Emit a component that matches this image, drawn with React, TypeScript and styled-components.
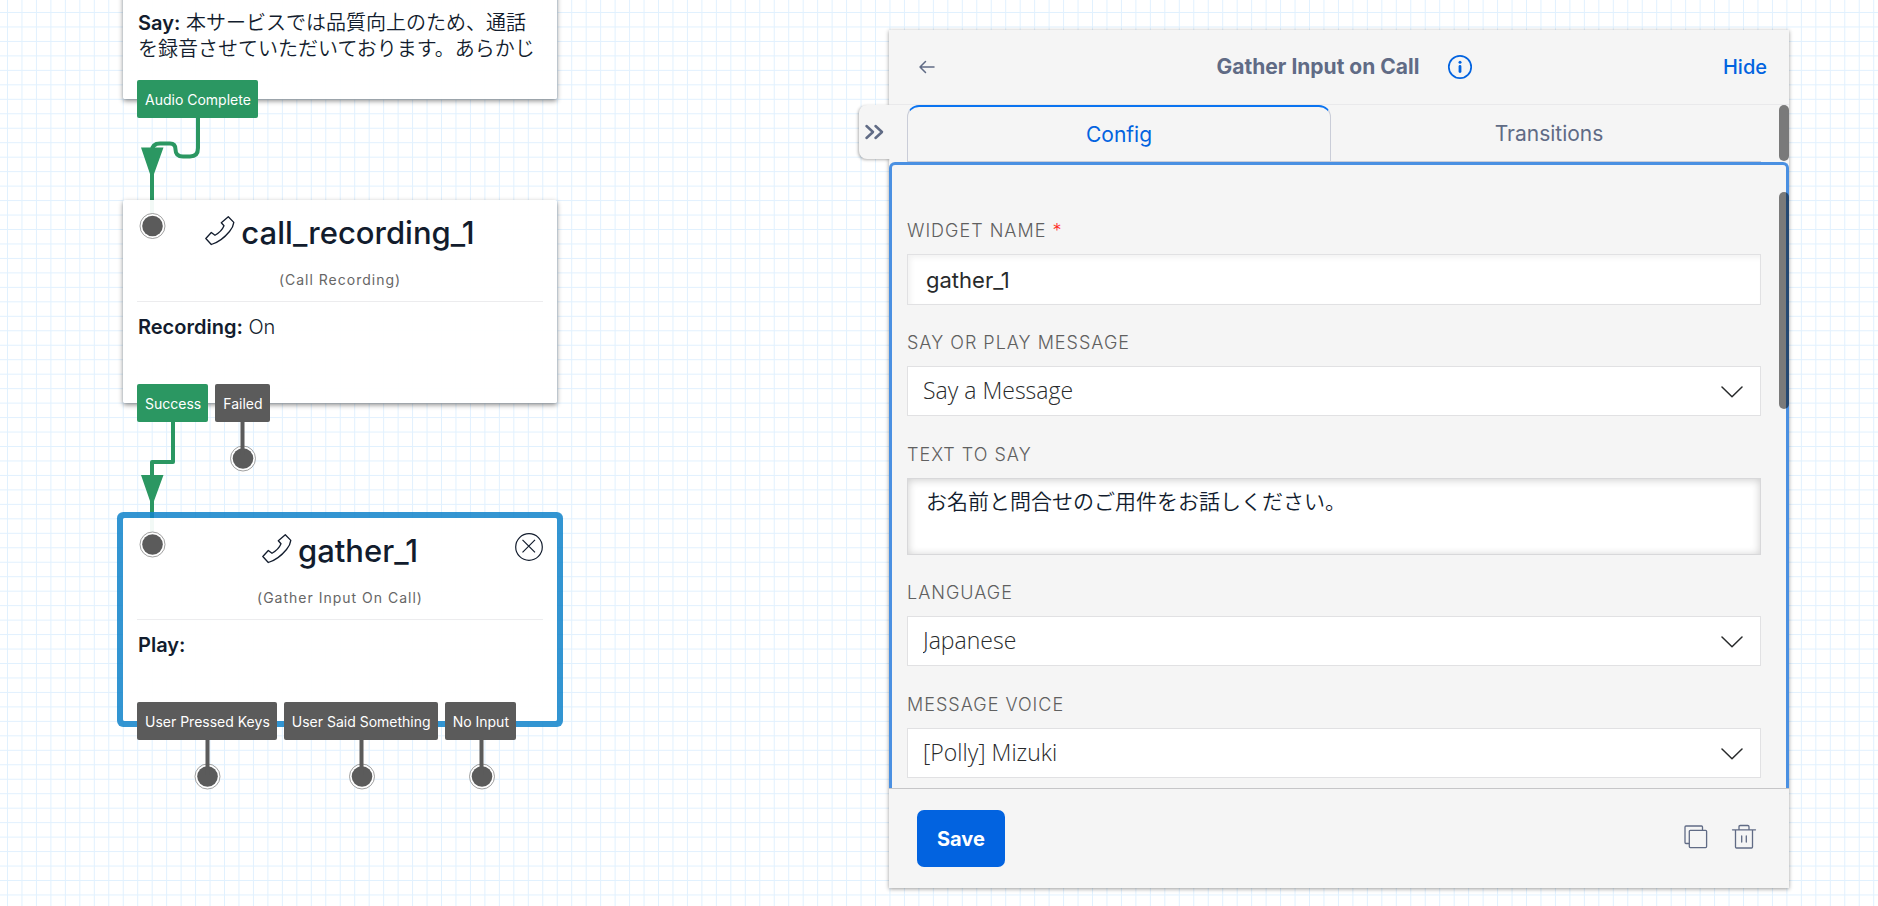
import React from "react";
import styled, { createGlobalStyle } from "styled-components";

const GlobalStyle = createGlobalStyle`
  * { box-sizing: border-box; }
  html, body { margin: 0; height: 100%; }
  #root { height: 100%; }
  body {
    font-family: Inter, "Noto Sans CJK JP", sans-serif;
    color: #121c2d;
    background: #fff;
  }
  button { font: inherit; color: inherit; background: none; border: 0; padding: 0; cursor: pointer; }
`;

const Page = styled.div`
  position: relative;
  display: flex;
  justify-content: flex-end;
  height: 100vh;
  min-height: 640px;
  overflow: hidden;
`;

/* ---------- canvas ---------- */

const Canvas = styled.main`
  position: absolute;
  inset: 0;
  overflow: hidden;
`;

const CanvasLayer = styled.svg`
  position: absolute;
  inset: 0;
  width: 100%;
  height: 100%;
`;

const Node = styled.section<{ $top: number; $height: number; $selected?: boolean }>`
  position: absolute;
  left: 123px;
  top: ${(p) => p.$top}px;
  width: 434px;
  height: ${(p) => p.$height}px;
  padding: 0 14px;
  border-radius: 2px;
  background: rgba(255, 255, 255, 0.94);
  box-shadow: ${(p) =>
    p.$selected
      ? "0 0 0 6px rgba(18, 131, 203, 0.86)"
      : "0 2px 5px rgba(0, 0, 0, 0.45)"};
`;

const NodeHeader = styled.header`
  display: flex;
  flex-direction: column;
  align-items: center;
  height: 102px;
  border-bottom: 1px solid #ececee;
`;

const NodeTitle = styled.h2`
  display: flex;
  align-items: center;
  gap: 6px;
  margin: 13px 0 0;
  font-size: 31px;
  line-height: 40px;
  font-weight: 450;
  svg { margin-bottom: 4px; }
`;

const NodeKind = styled.p`
  margin: 17px 0 0;
  font-size: 14px;
  line-height: 20px;
  letter-spacing: 1px;
  color: #666;
`;

const NodeText = styled.p`
  margin: 12px 0 0;
  padding-left: 1px;
  font-size: 20px;
  line-height: 26px;
  font-weight: 350;
  strong { font-weight: 600; }
`;

const Outputs = styled.div`
  position: absolute;
  left: 14px;
  bottom: -19px;
  display: flex;
  gap: 7px;
`;

const Output = styled.button<{ $done?: boolean }>`
  && {
    height: 38px;
    padding: 0 7px 0 8px;
    border-radius: 2px;
    background: ${(p) => (p.$done ? "#2b9762" : "#5b5b5b")};
    color: #fff;
    font-size: 14px;
    font-weight: 400;
    white-space: nowrap;
  }
`;

const RemoveButton = styled.button`
  position: absolute;
  top: 15px;
  right: 14px;
  width: 28px;
  height: 28px;
  svg { display: block; }
`;

/* ---------- side panel ---------- */

const Panel = styled.aside`
  position: relative;
  display: flex;
  flex-direction: column;
  width: 900px;
  max-width: calc(100% - 120px);
  margin: 30px 89px 18px 0;
  background: #f5f5f5;
  box-shadow: 0 1px 4px rgba(0, 0, 0, 0.4);
`;

const PanelHeader = styled.header`
  display: flex;
  align-items: center;
  height: 75px;
  flex: none;
  padding: 0 22px 0 26px;
  border-bottom: 1px solid #e9e9eb;
`;

const BackButton = styled.button`
  width: 52px;
  height: 24px;
  svg { display: block; }
`;

const PanelTitle = styled.div`
  display: flex;
  flex: 1;
  align-items: center;
  justify-content: center;
  gap: 28px;
  h1 { margin: 0; font-size: 21px; line-height: 28px; font-weight: 700; color: #606b85; }
  svg { display: block; }
`;

const HideButton = styled.button`
  && { color: #0263e0; font-size: 20px; font-weight: 500; }
`;

const CollapseButton = styled.button`
  position: absolute;
  left: -30px;
  top: 75px;
  width: 31px;
  height: 54px;
  && { background: #f5f5f5; }
  border-radius: 8px 0 0 8px;
  box-shadow: -1px 1px 3px rgba(0, 0, 0, 0.3);
  clip-path: inset(-6px 0 -6px -6px);
  svg { display: block; margin: 0 0 0 5px; }
`;

const Tabs = styled.div`
  display: grid;
  grid-template-columns: 1fr 1fr;
  column-gap: 6px;
  flex: none;
  height: 57px;
  margin: 0 28px 0 18px;
  border-bottom: 1px solid #cacdd8;
`;

const Tab = styled.button<{ $active?: boolean }>`
  && {
    font-size: 21px;
    color: ${(p) => (p.$active ? "#0263e0" : "#606b85")};
    ${(p) =>
      p.$active &&
      `border: 1px solid #cacdd8;
       border-top: 2px solid #0a73f0;
       border-bottom: 0;
       border-radius: 12px 12px 0 0;`}
  }
`;

const FormArea = styled.div`
  flex: 1;
  min-height: 0;
  overflow: hidden;
  border: 3px solid #4a90e2;
  border-bottom: 0;
  border-radius: 6px 6px 0 0;
  padding: 53px 25px 0 15px;
`;

const Field = styled.div<{ $select?: boolean }>`
  display: flex;
  flex-direction: column;
  gap: 10px;
  margin-bottom: ${(p) => (p.$select ? 26 : 25)}px;
`;

const Label = styled.label`
  font-size: 18px;
  line-height: 26px;
  font-weight: 350;
  letter-spacing: 1px;
  text-transform: uppercase;
  color: #606060;
  span { color: #ff2a1f; }
`;

const TextInput = styled.input`
  height: 51px;
  padding: 0 18px;
  border: 1px solid #e1e1e3;
  border-radius: 0;
  background: #fff;
  box-shadow: inset 3px 3px 5px rgba(0, 0, 0, 0.05);
  font: 400 22px Inter, sans-serif;
  color: #282a2b;
`;

const TextArea = styled.textarea`
  height: 77px;
  padding: 7px 18px;
  border: 1px solid #d8d8da;
  border-radius: 0;
  background: #fff;
  box-shadow: inset 0 1px 9px rgba(0, 0, 0, 0.2);
  font: 350 21px/28px "Noto Sans CJK JP", sans-serif;
  color: #121c2d;
  resize: none;
`;

const SelectBox = styled.div`
  position: relative;
  svg { position: absolute; right: 18px; top: 20px; pointer-events: none; }
`;

const Select = styled.select`
  display: block;
  width: 100%;
  height: 50px;
  padding: 0 48px 2px 15px;
  border: 1px solid #e1e1e3;
  border-radius: 0;
  appearance: none;
  background: #fff;
  font: 300 23px "Open Sans", sans-serif;
  color: #282a2b;
`;

const ScrollThumb = styled.div<{ $top: number; $height: number }>`
  position: absolute;
  right: 0;
  top: ${(p) => p.$top}px;
  width: 10px;
  height: ${(p) => p.$height}px;
  border-radius: 5px;
  background: rgba(0, 0, 0, 0.5);
`;

const PanelFooter = styled.footer`
  display: flex;
  align-items: center;
  flex: none;
  height: 100px;
  padding: 0 32px 0 28px;
  border-top: 1px solid #c6c6c8;
`;

const SaveButton = styled.button`
  && {
    height: 57px;
    padding: 0 20px;
    border-radius: 7px;
    background: #0263e0;
    color: #fff;
    font-size: 20px;
    font-weight: 700;
  }
`;

const FooterActions = styled.div`
  display: flex;
  gap: 22px;
  margin: 0 0 4px auto;
  svg { display: block; }
`;

/* ---------- drawings ---------- */

const GRID_TILE = 217;
const GRID_CELLS = 15;

const Grid = () => (
  <CanvasLayer aria-hidden="true">
    <defs>
      <pattern id="grid" x="7" y="12" width={GRID_TILE} height={GRID_TILE} patternUnits="userSpaceOnUse">
        {Array.from({ length: GRID_CELLS }, (_, i) => {
          const at = (i * GRID_TILE) / GRID_CELLS;
          return (
            <g key={i} fill="#e1f1fe">
              <rect x={at} y="0" width="1" height={GRID_TILE} />
              <rect x="0" y={at} width={GRID_TILE} height="1" />
            </g>
          );
        })}
      </pattern>
    </defs>
    <rect width="100%" height="100%" fill="url(#grid)" />
  </CanvasLayer>
);

const Wires = () => (
  <CanvasLayer aria-hidden="true">
    <g fill="none" stroke="#2b9762" strokeWidth="4">
      <path d="M198 116V148Q198 156.500 190 156.500H183Q175.500 156.500 175.500 149.500Q175.500 143.500 170 143.500H160Q152 143.500 152 151V226" />
      <path d="M173 422V462H152V545" strokeLinejoin="round" />
    </g>
    <path d="M141 147.500H163.500L154 174H150Z M141 475H163.500L154 501H150Z" fill="#2b9762" />
  </CanvasLayer>
);

const SOCKETS = [
  [152.5, 226],
  [243, 458.5],
  [152.5, 544.5],
  [207.5, 776.5],
  [362, 776.5],
  [482, 776.5],
];

const Sockets = () => (
  <CanvasLayer aria-hidden="true" pointerEvents="none">
    {SOCKETS.map(([x, y]) => (
      <g key={`${x}-${y}`}>
        <circle cx={x} cy={y} r="12.500" fill="#fff" stroke="#777" strokeWidth=".7" />
        <circle cx={x} cy={y} r="10.300" fill="#5b5b5b" />
      </g>
    ))}
    <path d="M242.500 421V455M207.500 739V775M361.500 739V775M481.500 739V775" stroke="#5b5b5b" strokeWidth="4" />
  </CanvasLayer>
);

const PhoneIcon = () => (
  <svg width="30" height="30" viewBox="0 0 30 30" fill="none" stroke="#121c2d" strokeWidth="1.300" strokeLinejoin="round" aria-hidden="true">
    <path d="M23.300 .8L28.800 6.400C28.500 9.500 27 12.500 24.500 15.500C20 21 13 26.500 6.300 28.500L.8 22.500L6.300 16.500L10 19.300C14 17 17.500 13.500 19 9.800L16.300 6.800Z" />
  </svg>
);

const Chevron = () => (
  <svg width="22" height="12" viewBox="0 0 22 12" fill="none" stroke="#282a2b" strokeWidth="1.500" strokeLinecap="round" strokeLinejoin="round" aria-hidden="true">
    <path d="M1 1L11 10.800L21 1" />
  </svg>
);

const SelectField = ({ id, label, value }: { id: string; label: string; value: string }) => (
  <Field $select>
    <Label htmlFor={id}>{label}</Label>
    <SelectBox>
      <Select id={id} defaultValue={value}>
        <option>{value}</option>
      </Select>
      <Chevron />
    </SelectBox>
  </Field>
);

export default function App() {
  return (
    <>
      <GlobalStyle />
      <Page>
        <Canvas>
          <Grid />
          <Wires />
          <Node $top={-104} $height={203}>
            <NodeHeader />
            <NodeText>
              <strong>Say:</strong> 本サービスでは品質向上のため、通話を録音させていただいております。あらかじ
            </NodeText>
            <Outputs>
              <Output $done>Audio Complete</Output>
            </Outputs>
          </Node>
          <Node $top={200} $height={203}>
            <NodeHeader>
              <NodeTitle>
                <PhoneIcon />
                call_recording_1
              </NodeTitle>
              <NodeKind>(Call Recording)</NodeKind>
            </NodeHeader>
            <NodeText>
              <strong>Recording:</strong> On
            </NodeText>
            <Outputs>
              <Output $done>Success</Output>
              <Output>Failed</Output>
            </Outputs>
          </Node>
          <Node $top={518} $height={203} $selected>
            <NodeHeader>
              <NodeTitle>
                <PhoneIcon />
                gather_1
              </NodeTitle>
              <NodeKind>(Gather Input On Call)</NodeKind>
            </NodeHeader>
            <RemoveButton aria-label="Remove widget">
              <svg width="28" height="28" viewBox="0 0 28 28" fill="none" stroke="#121c2d" strokeWidth="1.200">
                <circle cx="14" cy="14" r="13.300" />
                <path d="M7.500 6.800L20 19.300M20 6.800L7.500 19.300" />
              </svg>
            </RemoveButton>
            <NodeText>
              <strong>Play:</strong>
            </NodeText>
            <Outputs>
              <Output>User Pressed Keys</Output>
              <Output>User Said Something</Output>
              <Output>No Input</Output>
            </Outputs>
          </Node>
          <Sockets />
        </Canvas>

        <Panel>
          <PanelHeader>
            <BackButton aria-label="Back">
              <svg width="24" height="24" viewBox="0 0 24 24" fill="none" stroke="#606b85" strokeWidth="1.500" strokeLinecap="round" strokeLinejoin="round">
                <path d="M19 12H5M10.500 6.500L5 12L10.500 17.500" />
              </svg>
            </BackButton>
            <PanelTitle>
              <h1>Gather Input on Call</h1>
              <svg width="26" height="26" viewBox="0 0 26 26" aria-hidden="true">
                <circle cx="13" cy="13" r="11.200" fill="none" stroke="#0263e0" strokeWidth="1.700" />
                <circle cx="13" cy="8.200" r="1.500" fill="#0263e0" />
                <path d="M13 12.500V17.500" stroke="#0263e0" strokeWidth="2.800" strokeLinecap="round" />
              </svg>
            </PanelTitle>
            <HideButton>Hide</HideButton>
          </PanelHeader>
          <CollapseButton aria-label="Collapse panel">
            <svg width="22" height="18" viewBox="0 0 22 18" fill="none" stroke="#606b85" strokeWidth="2.500" strokeLinecap="round" strokeLinejoin="round">
              <path d="M2.500 3L9 9L2.500 15M11.500 3L18 9L11.500 15" />
            </svg>
          </CollapseButton>
          <Tabs role="tablist">
            <Tab role="tab" aria-selected="true" $active>
              Config
            </Tab>
            <Tab role="tab" aria-selected="false">
              Transitions
            </Tab>
          </Tabs>
          <FormArea>
            <Field>
              <Label htmlFor="widget-name">
                Widget name <span>*</span>
              </Label>
              <TextInput id="widget-name" defaultValue="gather_1" />
            </Field>
            <SelectField id="message-type" label="Say or play message" value="Say a Message" />
            <Field>
              <Label htmlFor="say-text">Text to say</Label>
              <TextArea id="say-text" defaultValue="お名前と問合せのご用件をお話しください。" />
            </Field>
            <SelectField id="language" label="Language" value="Japanese" />
            <SelectField id="voice" label="Message voice" value="[Polly] Mizuki" />
          </FormArea>
          <ScrollThumb $top={75} $height={56} />
          <ScrollThumb $top={162} $height={217} />
          <PanelFooter>
            <SaveButton>Save</SaveButton>
            <FooterActions>
              <button aria-label="Duplicate widget">
                <svg width="26" height="26" viewBox="0 0 26 26" fill="none" stroke="#606b85" strokeWidth="1.300">
                  <path d="M6 19.500H3Q2 19.500 2 18.500V3Q2 2 3 2H18.500Q19.500 2 19.500 3V6" />
                  <rect x="6.300" y="6.300" width="17.300" height="17.300" rx="1" />
                </svg>
              </button>
              <button aria-label="Delete widget">
                <svg width="26" height="26" viewBox="0 0 26 26" fill="none" stroke="#606b85" strokeWidth="1.300" strokeLinecap="round">
                  <path d="M1.500 5.800H24.500M4.500 5.800V23Q4.500 24 5.500 24H20.500Q21.500 24 21.500 23V5.800M8 5.800V2.800Q8 1.500 9.300 1.500H16.700Q18 1.500 18 2.800V5.800M10.700 12V18M15.300 12V18" />
                </svg>
              </button>
            </FooterActions>
          </PanelFooter>
        </Panel>
      </Page>
    </>
  );
}
